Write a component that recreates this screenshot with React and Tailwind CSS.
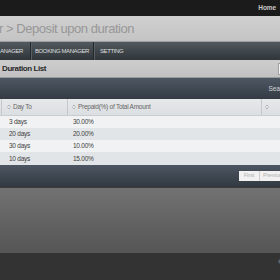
import { Fragment } from 'react'

const rows = [
  { to: '3 days', pct: '30.00%' },
  { to: '20 days', pct: '20.00%' },
  { to: '30 days', pct: '10.00%' },
  { to: '10 days', pct: '15.00%' },
]

function SortIcon() {
  return (
    <svg width="4" height="6" viewBox="0 0 4 6" className="shrink-0">
      <path d="M0.5 2.5 L2 1 L3.5 2.5" fill="none" stroke="#9aa0a6" strokeWidth="0.7" />
      <path d="M0.5 3.5 L2 5 L3.5 3.5" fill="none" stroke="#9aa0a6" strokeWidth="0.7" />
    </svg>
  )
}

function NavSep() {
  return (
    <div className="flex h-full">
      <div className="w-px bg-[#25292c]" />
      <div className="w-px bg-[#566066]" />
    </div>
  )
}

export default function App() {
  return (
    <div className="w-[280px] h-[280px] overflow-hidden flex flex-col font-['Liberation_Sans',Arial,sans-serif]">
      {/* top bar */}
      <div className="h-[16px] bg-[#1b1b1b] flex items-center justify-end pr-[4px] shrink-0">
        <span className="text-[6.5px] font-bold text-[#c8c8c8] tracking-[-0.1px]">Home</span>
      </div>

      {/* title */}
      <div className="h-[25px] shrink-0 bg-gradient-to-b from-[#d0d0d0] to-[#c4c4c4] flex items-center">
        <span className="ml-[-1px] text-[13px] text-[#979797] tracking-[-0.45px] whitespace-nowrap">
          r &gt; Deposit upon duration
        </span>
      </div>

      {/* nav */}
      <div className="h-[19px] shrink-0 border-t border-[#9aa0a3] bg-gradient-to-b from-[#535a5f] to-[#2f3539] flex items-center text-[6px] text-[#dcdedf] tracking-[-0.4px] whitespace-nowrap">
        <span className="w-[30px]">ANAGER</span>
        <NavSep />
        <span className="pl-[3px] pr-[4px]">BOOKING MANAGER</span>
        <NavSep />
        <span className="pl-[5px]">SETTING</span>
      </div>

      {/* list header */}
      <div className="h-[18px] shrink-0 bg-gradient-to-b from-[#cdcdcd] to-[#c2c2c2] border-b border-[#9a9a9a] flex items-center justify-between">
        <span className="pl-[2px] text-[8px] font-bold text-[#2a2a2a] tracking-[-0.4px]">Duration List</span>
        <div className="w-[10px] h-[12px] mr-[-8px] bg-[#f4f4f4] border border-[#a0a0a0]" />
      </div>

      {/* search bar */}
      <div className="h-[21px] shrink-0 bg-gradient-to-b from-[#4e5864] to-[#333a43] flex items-center justify-end">
        <span className="mr-[-8px] text-[6.5px] text-[#d3d6d9] tracking-[-0.2px]">Search</span>
      </div>

      {/* table */}
      <div className="shrink-0 text-[6.5px] tracking-[-0.25px] text-[#4a4a4a] whitespace-nowrap">
        <div className="h-[17px] grid grid-cols-[2px_66px_194px_18px] bg-gradient-to-b from-[#e6e8ea] to-[#dcdfe1] border-b border-[#c9cdd0]">
          <div className="border-r border-[#c4c8cb]" />
          <div className="flex items-center gap-[2px] pl-[5px] border-r border-[#c4c8cb] text-[#666]">
            <SortIcon />
            <span>Day To</span>
          </div>
          <div className="flex items-center gap-[2px] pl-[4px] border-r border-[#c4c8cb] text-[#666]">
            <SortIcon />
            <span>Prepaid(%) of Total Amount</span>
          </div>
          <div className="flex items-center pl-[3px]">
            <SortIcon />
          </div>
        </div>
        {rows.map((r, i) => (
          <Fragment key={r.to}>
            <div
              className={
                i % 2 === 0
                  ? 'h-[12px] grid grid-cols-[2px_66px_212px] items-center bg-[#f0f2f3]'
                  : 'h-[12.3px] grid grid-cols-[2px_66px_212px] items-center bg-[#e2e5e7]'
              }
            >
              <div />
              <div className="pl-[7px] text-[#3f3f3f]">{r.to}</div>
              <div className="pl-[5px] text-[#3f3f3f]">{r.pct}</div>
            </div>
          </Fragment>
        ))}
      </div>

      {/* footer bar */}
      <div className="h-[22px] shrink-0 bg-gradient-to-b from-[#4d5763] to-[#313840] flex items-center justify-end">
        <div className="flex h-[10px] mr-[-12px] text-[6px] text-[#b3b3b3] tracking-[-0.2px]">
          <div className="w-[21px] flex items-center justify-center bg-[#f1f1f1] border-r border-[#cfcfcf]">First</div>
          <div className="w-[32px] flex items-center pl-[3px] bg-[#f1f1f1]">Previous</div>
        </div>
      </div>

      {/* content filler */}
      <div className="h-[66px] shrink-0 bg-gradient-to-b from-[#727272] to-[#555555] border-t border-[#3a3a3a]" />

      {/* bottom */}
      <div className="flex-1 bg-[#333333] flex justify-end pt-[5px]">
        <span className="mr-[-3px] text-[6px] text-[#d0d0d0]">©</span>
      </div>
    </div>
  )
}
